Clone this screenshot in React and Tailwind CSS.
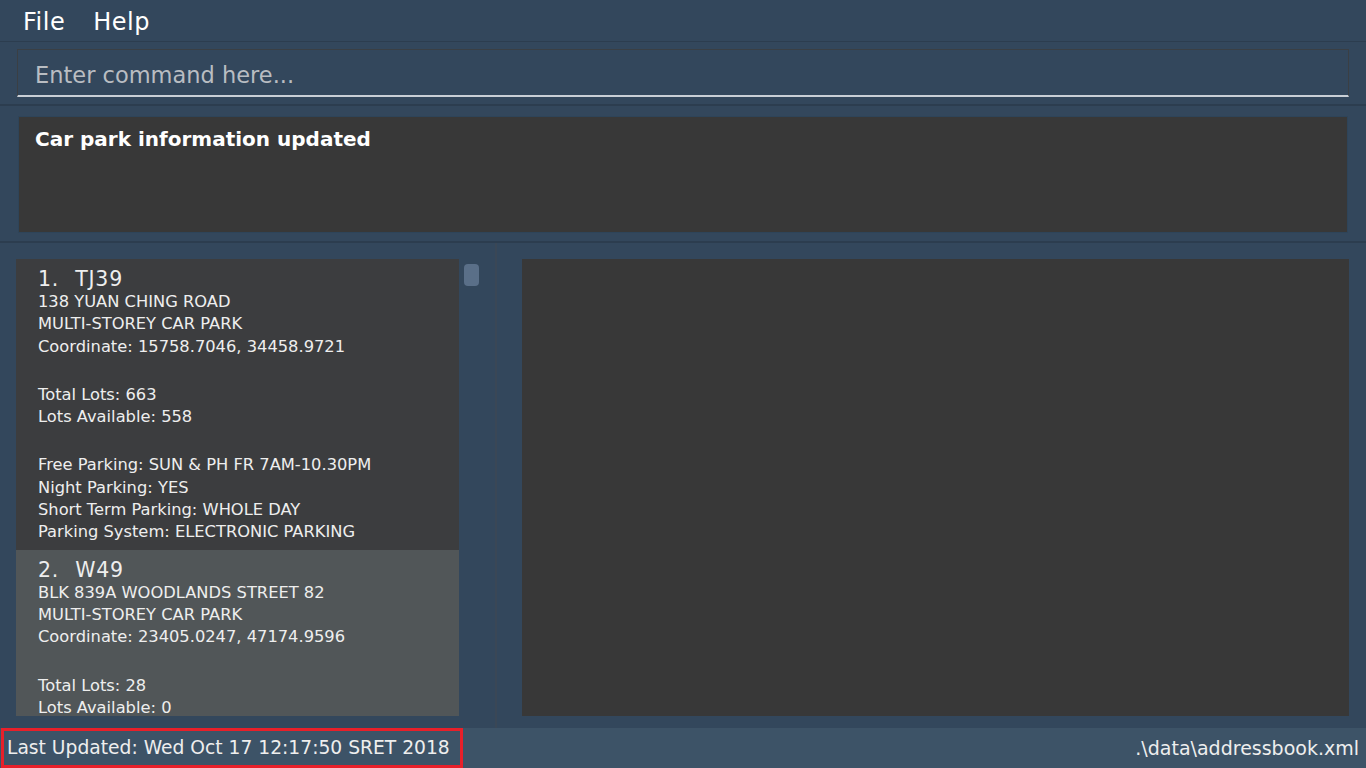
const font = { fontFamily: '"DejaVu Sans", "Open Sans", sans-serif' };

const carparks = [
    {
        id: 'TJ39',
        address: '138 YUAN CHING ROAD',
        type: 'MULTI-STOREY CAR PARK',
        coord: '15758.7046, 34458.9721',
        total: 663,
        available: 558,
        free: 'SUN & PH FR 7AM-10.30PM',
        night: 'YES',
        shortTerm: 'WHOLE DAY',
        system: 'ELECTRONIC PARKING',
    },
    {
        id: 'W49',
        address: 'BLK 839A WOODLANDS STREET 82',
        type: 'MULTI-STOREY CAR PARK',
        coord: '23405.0247, 47174.9596',
        total: 28,
        available: 0,
        free: 'NO',
        night: 'YES',
        shortTerm: 'WHOLE DAY',
        system: 'ELECTRONIC PARKING',
    },
];

const CarparkCard = ({ index, c, selected }) => (
    <div className={`${selected ? 'bg-[#515658]' : 'bg-[#3c3d3f]'} pl-[22px] pt-[8px] pb-[6px] text-[#eeeeee]`}>
        <p className="text-[20.5px] leading-[24px] tracking-[0.8px] whitespace-nowrap">
            <span>{index}.</span>
            <span className="ml-[16px]">{c.id}</span>
        </p>
        <div className="text-[16.3px] leading-[22.3px] whitespace-nowrap">
            <p>{c.address}</p>
            <p>{c.type}</p>
            <p>Coordinate: {c.coord}</p>
            <div className="h-[26px]" />
            <p>Total Lots: {c.total}</p>
            <p>Lots Available: {c.available}</p>
            <div className="h-[26px]" />
            <p>Free Parking: {c.free}</p>
            <p>Night Parking: {c.night}</p>
            <p>Short Term Parking: {c.shortTerm}</p>
            <p>Parking System: {c.system}</p>
        </div>
    </div>
);

const App = () => {
    return (
        <div className="w-[1366px] h-[768px] flex flex-col bg-[#33475c] overflow-hidden" style={font}>
            {/* Menu bar */}
            <div className="h-[42px] flex items-center gap-[28px] px-[23px] pt-[3px] text-[24px] tracking-[0.5px] text-white border-b border-[#2c3d4f]">
                <span>File</span>
                <span>Help</span>
            </div>

            {/* Command box */}
            <div className="h-[64px] px-[17px] pt-[7px] border-b-2 border-[#2c3d4f]">
                <div className="h-[48px] border border-[#3a3f44] border-b-2 border-b-[#c9cfd6] flex items-center px-[17px] pt-[6px] text-[22.5px] text-[#b9bdc2]">
                    Enter command here...
                </div>
            </div>

            {/* Result display */}
            <div className="h-[137px] px-[18px] pt-[10px] border-b-2 border-[#2c3d4f]">
                <div className="h-[117px] bg-[#383838] border border-[#2e4459] px-[16px] pt-[7px] text-[20px] font-semibold text-white">
                    Car park information updated
                </div>
            </div>

            {/* Main */}
            <div className="flex-1 flex min-h-0">
                <div className="w-[497px] flex border-r-2 border-[#3a4756] pt-[16px] pl-[16px]">
                    <div className="w-[443px] h-[457px] overflow-hidden">
                        {carparks.map((c, i) => (
                            <CarparkCard key={c.id} index={i + 1} c={c} selected={i === 1} />
                        ))}
                    </div>
                    <div className="pl-[5px] pt-[5px]">
                        <div className="w-[15px] h-[22px] rounded-[4px] bg-[#5a6f88]" />
                    </div>
                </div>
                <div className="flex-1 pl-[25px] pr-[17px] pt-[16px] pb-[12px]">
                    <div className="h-[457px] bg-[#383838]" />
                </div>
            </div>

            {/* Status bar */}
            <div className="h-[40px] bg-[#3d5367] flex items-center justify-between text-[18.7px] leading-[22px] text-[#eeeeee]">
                <div className="h-[40px] w-[462px] ml-[1px] border-[3px] border-[#e8202a] flex items-center pl-[3px] whitespace-nowrap">
                    Last Updated: Wed Oct 17 12:17:50 SRET 2018
                </div>
                <span className="pr-[7px] text-[19px]">.\data\addressbook.xml</span>
            </div>
        </div>
    );
};

export default App;
